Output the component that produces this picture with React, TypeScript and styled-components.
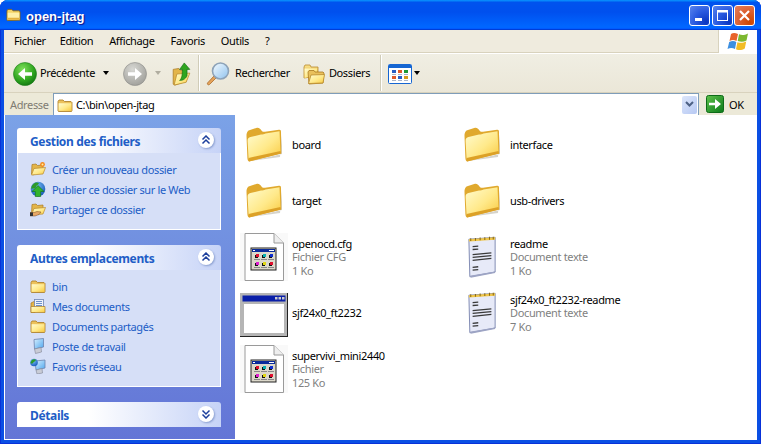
import React from 'react';
import styled, { createGlobalStyle } from 'styled-components';

const GlobalStyle = createGlobalStyle`
  html, body {
    margin: 0;
    padding: 0;
    background: #fff;
  }
  body {
    font-family: "Noto Sans", "Liberation Sans", sans-serif;
    font-size: 11px;
    letter-spacing: -0.36px;
  }
  svg {
    display: block;
  }
`;

const Window = styled.div`
  width: 761px;
  height: 444px;
  display: flex;
  flex-direction: column;
  overflow: hidden;
  border-radius: 8px 8px 0 0;
  background: #0a4fe4;
  box-shadow: inset 1px 0 #0831d9, inset -1px 0 #0831d9, inset 0 -1px #0831d9;
`;

const TitleBar = styled.div`
  height: 30px;
  flex: none;
  display: flex;
  align-items: center;
  padding: 0 6px 0 6px;
  box-sizing: border-box;
  background: linear-gradient(180deg, #0997ff, #0053ee 8%, #0050ee 40%, #06f 88%, #06f 93%, #005bff 95%, #003dd7 96%, #003dd7);
`;

const TitleText = styled.div`
  flex: 1;
  margin-left: 5px;
  padding-top: 2px;
  color: #fff;
  letter-spacing: 0;
  font: bold 13px "Liberation Sans", sans-serif;
  text-shadow: 1px 1px 1px #0f1089;
`;

const WinButton = styled.div<{ $close?: boolean }>`
  width: 21px;
  height: 21px;
  margin-left: 1.5px;
  box-sizing: border-box;
  border: 1px solid #fff;
  border-radius: 3px;
  display: flex;
  align-items: center;
  justify-content: center;
  background: ${p =>
    p.$close
      ? 'radial-gradient(circle at 80% 85%, #cc4600, #dc6030 50%, #e5805d)'
      : 'radial-gradient(circle at 85% 85%, #0a35c0, #2a5ae0 50%, #5a85ee)'};
`;

const Frame = styled.div`
  flex: 1;
  min-height: 0;
  display: flex;
  flex-direction: column;
  margin: 0 4px 4px;
  background: #fff;
`;

const MenuRow = styled.div`
  height: 23px;
  flex: none;
  display: flex;
  background: #efebde;
  box-sizing: border-box;
  border-bottom: 1px solid #d8d2bd;
`;

const MenuItems = styled.div`
  flex: 1;
  display: flex;
  align-items: center;
  padding: 0 0 2px 2px;
`;

const MenuItem = styled.span`
  padding: 0 8px;
  color: #000;

  &:first-child {
    padding-right: 6px;
  }
`;

const LogoBox = styled.div`
  width: 39px;
  margin-bottom: -1px;
  flex: none;
  background: #fff;
  border-left: 1px solid #d8d2bd;
  box-sizing: border-box;
  display: flex;
  align-items: center;
  justify-content: center;
`;

const Toolbar = styled.div`
  height: 40px;
  flex: none;
  display: flex;
  align-items: center;
  box-sizing: border-box;
  padding: 2px 0 0 9px;
  background: linear-gradient(180deg, #f0eee3, #ebe7d8);
  border-top: 1px solid #fff;
  border-bottom: 1px solid #d8d2bd;
`;

const ToolLabel = styled.span<{ $gap?: number }>`
  margin-left: ${p => p.$gap ?? 3}px;
  margin-top: -4px;
  color: #000;
`;

const Caret = styled.span<{ $off?: boolean; $x: number }>`
  width: 0;
  height: 0;
  margin-left: ${p => p.$x}px;
  margin-top: -2px;
  border-left: 3.5px solid transparent;
  border-right: 3.5px solid transparent;
  border-top: 4px solid ${p => (p.$off ? '#b0ada0' : '#000')};
`;

const ToolSeparator = styled.div<{ $x: number }>`
  width: 1px;
  height: 36px;
  margin: -2px 0 0 ${p => p.$x}px;
  background: #d0ccb8;
  border-right: 1px solid #fff;
`;

const IconSlot = styled.div<{ $x: number }>`
  margin-left: ${p => p.$x}px;
  flex: none;
`;

const AddressBar = styled.div`
  height: 22px;
  flex: none;
  display: flex;
  align-items: center;
  background: #ece9d8;
`;

const AddressLabel = styled.span`
  width: 49px;
  flex: none;
  padding-left: 6px;
  box-sizing: border-box;
  color: #7f7c73;
`;

const AddressField = styled.div`
  width: 646px;
  height: 22px;
  flex: none;
  display: flex;
  align-items: center;
  gap: 3px;
  box-sizing: border-box;
  padding: 0 1px 0 3px;
  background: #fff;
  border: 1px solid #7f9db9;
  border-bottom: none;
`;

const AddressText = styled.span`
  flex: 1;
  color: #000;
`;

const DropButton = styled.div`
  width: 15px;
  height: 18px;
  border-radius: 2px;
  background: linear-gradient(135deg, #dce6fb, #b7c9f3);
  display: flex;
  align-items: center;
  justify-content: center;
`;

const GoLabel = styled.span`
  margin-left: 5px;
  color: #000;
`;

const Body = styled.div`
  flex: 1;
  min-height: 0;
  display: flex;
`;

const Sidebar = styled.div`
  width: 231px;
  flex: none;
  box-sizing: border-box;
  padding: 13px 14px 0 12px;
  display: flex;
  flex-direction: column;
  gap: 15px;
  background: linear-gradient(180deg, #7ba2e7, #6375d6);
  border-left: 1px solid #fff;
  border-bottom: 1px solid #fff;
`;

const Panel = styled.div``;

const PanelHeader = styled.div`
  height: 25px;
  display: flex;
  align-items: center;
  justify-content: space-between;
  box-sizing: border-box;
  padding: 0 7px 0 13px;
  border-radius: 3px 3px 0 0;
  background: linear-gradient(90deg, #fff 35%, #c6d3f7);
`;

const PanelTitle = styled.span`
  padding-top: 2px;
  color: #215dc6;
  font: bold 12px "Noto Sans", "Liberation Sans", sans-serif;
  letter-spacing: -0.36px;
`;

const Chevron = styled.div`
  width: 16px;
  height: 16px;
  margin-bottom: 1px;
  border-radius: 50%;
  background: #fff;
  box-shadow: 1px 1px 2px #8a9fd0;
  display: flex;
  align-items: center;
  justify-content: center;
`;

const PanelBody = styled.div`
  padding: 6px 12px 10px;
  background: #d6dff7;
  border: 1px solid #fff;
  border-top: none;
`;

const TaskLink = styled.div`
  height: 20px;
  display: flex;
  align-items: center;
  gap: 6px;
  color: #215dc6;
`;

const Content = styled.div`
  flex: 1;
  padding: 2px 0 0 5px;
  background: #fff;
  display: grid;
  grid-template-columns: 218px 218px;
  grid-auto-rows: 56px;
  align-content: start;
`;

const FileItem = styled.div<{ $col: number; $row: number }>`
  grid-column: ${p => p.$col};
  grid-row: ${p => p.$row};
  display: flex;
  align-items: center;
  gap: 4px;
`;

const FileIcon = styled.div`
  width: 48px;
  height: 48px;
  flex: none;
  display: flex;
  align-items: center;
  justify-content: center;
`;

const FileText = styled.div`
  display: flex;
  flex-direction: column;
  line-height: 13.5px;
`;

const FileName = styled.span`
  color: #000;
`;

const FileMeta = styled.span`
  color: #7f7f7f;
`;

const Gradients = () => (
  <svg width="0" height="0" style={{ position: 'absolute' }}>
    <defs>
      <linearGradient id="folderFront" x1="0" y1="0" x2="1" y2="1">
        <stop offset="0" stopColor="#fffcd0" />
        <stop offset="0.55" stopColor="#ffe98a" />
        <stop offset="1" stopColor="#f9c93f" />
      </linearGradient>
      <linearGradient id="folderBack" x1="0" y1="0" x2="0" y2="1">
        <stop offset="0" stopColor="#fbe58e" />
        <stop offset="1" stopColor="#d69a2a" />
      </linearGradient>
      <radialGradient id="greenBall" cx="0.4" cy="0.3" r="0.8">
        <stop offset="0" stopColor="#7ee05a" />
        <stop offset="0.6" stopColor="#2fa51f" />
        <stop offset="1" stopColor="#0b6b0f" />
      </radialGradient>
      <radialGradient id="greyBall" cx="0.4" cy="0.3" r="0.8">
        <stop offset="0" stopColor="#d8d8d4" />
        <stop offset="1" stopColor="#9b9b96" />
      </radialGradient>
      <radialGradient id="globe" cx="0.4" cy="0.3" r="0.8">
        <stop offset="0" stopColor="#7cc0f5" />
        <stop offset="1" stopColor="#0d4fb5" />
      </radialGradient>
      <linearGradient id="screen" x1="0" y1="0" x2="1" y2="1">
        <stop offset="0" stopColor="#d8f0ff" />
        <stop offset="1" stopColor="#4ea6ee" />
      </linearGradient>
      <linearGradient id="goGreen" x1="0" y1="0" x2="1" y2="1">
        <stop offset="0" stopColor="#5ec24a" />
        <stop offset="1" stopColor="#0b7a1a" />
      </linearGradient>
      <linearGradient id="lens" x1="0" y1="0" x2="1" y2="1">
        <stop offset="0" stopColor="#f4fbff" />
        <stop offset="1" stopColor="#8fc2ee" />
      </linearGradient>
    </defs>
  </svg>
);

const FolderBig = () => (
  <svg width="36" height="36" viewBox="0 0 36 36">
    <path d="M4 34 L36 27 L36 8 L34 30 Z" fill="#b9b5a8" opacity="0.6" />
    <path d="M0.5 9 C0.5 5 2 3.5 4 3 L11 0.8 C13 0.6 14 1.5 15.5 3.5 C16.5 5 17.5 5 19 4.7 L33 2.8 C34.5 2.6 35 3.2 35 5 L35.3 26.5 L3 34.5 C2 34 1.5 33 1.4 31 Z" fill="#e0a92e" />
    <path d="M1.6 14 C1.6 11.5 2.6 10.6 4.5 10.1 L15 7.6 C17 7.1 18 7.1 19.5 6.4 L33.5 4.2 L34.5 25.6 L4 33 C3 33 2.6 32 2.5 30.5 Z" fill="url(#folderFront)" />
    <path d="M2.5 31 L34.5 24 L35 26.5 L3 34.5 Z" fill="#dca127" />
  </svg>
);

const OpenFolder = () => (
  <g>
    <path d="M2 3.5 L6 3 L7.5 4.5 L13 4 L13 8 L3 14 L1.5 13 Z" fill="#e3b54a" stroke="#a97a22" strokeWidth="0.7" />
    <path d="M1.5 14 L4 7.5 L15.5 6.5 L13 13 Z" fill="url(#folderFront)" stroke="#b98a2d" strokeWidth="0.7" />
  </g>
);

const FolderSmall = () => (
  <svg width="16" height="16" viewBox="0 0 16 16">
    <path d="M1 4.5 L2 3 L6 3 L7.5 4.5 L14 4.5 L15 5.5 L15 13.5 L14.5 14.5 L1.5 14.5 L1 14 Z" fill="#ecc25c" stroke="#a97a22" strokeWidth="0.8" />
    <path d="M1.6 6.2 L14.4 6.2 L14.4 13.8 L1.6 13.8 Z" fill="url(#folderFront)" />
  </svg>
);

const NewFolderIcon = () => (
  <svg width="16" height="16" viewBox="0 0 16 16">
    <OpenFolder />
    <circle cx="12.5" cy="3.5" r="2.4" fill="#f58a1f" />
    <circle cx="12.5" cy="3.5" r="1" fill="#fff2a0" />
  </svg>
);

const PublishIcon = () => (
  <svg width="16" height="16" viewBox="0 0 16 16">
    <circle cx="8" cy="8" r="7.3" fill="url(#globe)" />
    <path d="M3 3.5 C5 1 8 1 9 2.5 C8 4.5 6 4 6 6 C5 8 3 7 1.5 8 C1 6 2 4.5 3 3.5 Z" fill="#2c9a28" />
    <path d="M8 4.5 L14 10.5 L10.7 10.5 L10.7 15.5 L5.3 15.5 L5.3 10.5 L2 10.5 Z" fill="#33b42c" stroke="#0e6b12" strokeWidth="0.6" />
  </svg>
);

const ShareIcon = () => (
  <svg width="16" height="16" viewBox="0 0 16 16">
    <OpenFolder />
    <path d="M0 11.5 L4 11.5 L7 10.5 L11 11 L9 13.5 L5 15 L0 15 Z" fill="#e8a867" stroke="#7b4a20" strokeWidth="0.5" />
    <rect x="0" y="11.5" width="3" height="3.5" fill="#333" />
  </svg>
);

const MyDocsIcon = () => (
  <svg width="16" height="16" viewBox="0 0 16 16">
    <path d="M1 5 L5 3 L5 14.5 L1 14.5 Z" fill="#e3b54a" stroke="#a97a22" strokeWidth="0.7" />
    <rect x="4.5" y="1.5" width="9" height="8" fill="#eef3fb" stroke="#6f86b5" strokeWidth="0.8" />
    <path d="M6 3.5 H12 M6 5.5 H12 M6 7.5 H12" stroke="#5d84c4" strokeWidth="0.9" />
    <path d="M1 8.5 H15 V14.5 H1 Z" fill="url(#folderFront)" stroke="#a97a22" strokeWidth="0.7" />
  </svg>
);

const ComputerIcon = () => (
  <svg width="16" height="16" viewBox="0 0 16 16">
    <path d="M4 1.5 L13.5 0.5 L13.5 9 L4.5 11 Z" fill="url(#screen)" stroke="#6c83ad" strokeWidth="0.8" />
    <path d="M4.5 11 L11 9.5 L11.5 14 L5.5 15.5 Z" fill="#c9ccd6" stroke="#7f8596" strokeWidth="0.6" />
  </svg>
);

const NetworkIcon = () => (
  <svg width="16" height="16" viewBox="0 0 16 16">
    <path d="M5 3 L15 2 L15 10 L6 12 Z" fill="url(#screen)" stroke="#6c83ad" strokeWidth="0.8" />
    <path d="M6 12 L12 10.5 L12.5 15 L7 16 Z" fill="#c9ccd6" stroke="#7f8596" strokeWidth="0.6" />
    <circle cx="4" cy="4.5" r="3.8" fill="url(#globe)" />
    <path d="M1.5 2.5 C3 1 5 1 6 2 C5 4 3.5 3.5 3 5 C2 6 1 5.5 0.5 5 Z" fill="#2c9a28" />
  </svg>
);

const Chevrons = ({ down }: { down?: boolean }) => (
  <svg width="10" height="10" viewBox="0 0 10 10">
    <path
      d={down ? 'M1.5 1.5 L5 5 L8.5 1.5 M1.5 5.5 L5 9 L8.5 5.5' : 'M1.5 4.5 L5 1 L8.5 4.5 M1.5 8.5 L5 5 L8.5 8.5'}
      fill="none"
      stroke="#1c3f9c"
      strokeWidth="1.5"
    />
  </svg>
);

const NavBall = ({ forward }: { forward?: boolean }) => (
  <svg width="24" height="24" viewBox="0 0 24 24">
    <circle cx="12" cy="12" r="11.5" fill={forward ? 'url(#greyBall)' : 'url(#greenBall)'} stroke={forward ? '#8c8c88' : '#1c7d1a'} strokeWidth="0.6" />
    <path
      d={forward ? 'M5 10.2 H12 V6 L19 12 L12 18 V13.8 H5 Z' : 'M19 10.2 H12 V6 L5 12 L12 18 V13.8 H19 Z'}
      fill="#fff"
    />
  </svg>
);

const UpIcon = () => (
  <svg width="19" height="24" viewBox="0 0 20 26">
    <path d="M1 8 L7 7 L9 9 L15 9 L15 21 L3 25 L1 24 Z" fill="#e3b54a" stroke="#a97a22" strokeWidth="0.8" />
    <path d="M2 25 L5 13 L19 12 L15 22 Z" fill="url(#folderFront)" stroke="#b98a2d" strokeWidth="0.8" />
    <path d="M13 1 L19 8 L16 8 L16 15 C14 19 11 20 8 20 C10 18 11 15 11 8 L8 8 Z" fill="#2fa51f" stroke="#0e6b12" strokeWidth="0.7" />
  </svg>
);

const SearchIcon = () => (
  <svg width="24" height="24" viewBox="0 0 24 24">
    <path d="M8 14 L1.5 21 C1 22 2 23.5 3.5 22.5 L10 16 Z" fill="#e6a35a" stroke="#a96c2b" strokeWidth="0.8" />
    <circle cx="14.5" cy="9" r="8" fill="url(#lens)" stroke="#8ea3b8" strokeWidth="1.6" />
  </svg>
);

const FoldersIcon = () => (
  <svg width="22" height="22" viewBox="0 0 22 22">
    <path d="M1 4 L2 2 L7 2 L8 4 L15 4 L15 13 L1 15 Z" fill="url(#folderBack)" stroke="#b98a2d" strokeWidth="0.8" />
    <path d="M1.5 15 L1.5 5.5 L14 5.5 L14 12 Z" fill="url(#folderFront)" />
    <path d="M5 9 L6 7.5 L11 7.5 L12 9 L20 9 L21 10 L20 20 L6 21 Z" fill="#e9c05c" stroke="#a97a22" strokeWidth="0.8" />
    <path d="M5.5 20.5 L8 12 L21.5 11.5 L20 20 Z" fill="url(#folderFront)" stroke="#b98a2d" strokeWidth="0.8" />
  </svg>
);

const ViewsIcon = () => (
  <svg width="24" height="20" viewBox="0 0 24 20">
    <rect x="0.5" y="0.5" width="23" height="19" rx="1" fill="#fff" stroke="#1666d2" />
    <rect x="1" y="1" width="22" height="3" fill="#1666d2" />
    <rect x="4" y="6" width="4" height="3" fill="#2a5fc4" />
    <rect x="10" y="6" width="4" height="3" fill="#e05a2a" />
    <rect x="16" y="6" width="4" height="3" fill="#1f9a35" />
    <rect x="4" y="12" width="4" height="3" fill="#e05a2a" />
    <rect x="10" y="12" width="4" height="3" fill="#2a5fc4" />
    <rect x="16" y="12" width="4" height="3" fill="#d89a1a" />
    <path d="M4 10.5 H8 M10 10.5 H14 M16 10.5 H20 M4 16.5 H8 M10 16.5 H14 M16 16.5 H20" stroke="#a9b4c8" />
  </svg>
);

const GoIcon = () => (
  <svg width="18" height="18" viewBox="0 0 18 18">
    <rect x="0.5" y="0.5" width="17" height="17" rx="2" fill="url(#goGreen)" stroke="#0d6b18" />
    <path d="M3 7.7 H9 V4 L15 9 L9 14 V10.3 H3 Z" fill="#fff" />
  </svg>
);

const DropChevron = () => (
  <svg width="9" height="7" viewBox="0 0 9 7">
    <path d="M1 1 L4.5 4.5 L8 1" fill="none" stroke="#4d6185" strokeWidth="2" />
  </svg>
);

const WindowsLogo = () => (
  <svg width="22" height="20" viewBox="0 0 22 20">
    <path d="M4 2 C6 0.5 8 0.5 11 2 L9.5 9 C7 7.5 5 7.5 2.5 9 Z" fill="#e8632b" />
    <path d="M12 2.3 C15 3.5 17 3.5 21 1.5 L19.5 8.5 C16.5 10 14 10 10.7 9 Z" fill="#7cb82f" />
    <path d="M2.2 10 C5 8.5 7 8.5 9.3 10 L8 17 C5.5 15.5 3 15.5 0.5 17 Z" fill="#3d8fe0" />
    <path d="M10.4 10.2 C13.5 11 16 11 19.2 9.5 L17.8 16.5 C14.5 18.5 12 18.5 9 17.2 Z" fill="#f2bc25" />
  </svg>
);

const MinGlyph = () => (
  <svg width="13" height="13" viewBox="0 0 13 13">
    <rect x="2" y="9" width="7" height="3" fill="#fff" />
  </svg>
);

const MaxGlyph = () => (
  <svg width="13" height="13" viewBox="0 0 13 13">
    <rect x="1.5" y="1.5" width="10" height="10" fill="none" stroke="#fff" />
    <rect x="1" y="1" width="11" height="2.5" fill="#fff" />
  </svg>
);

const CloseGlyph = () => (
  <svg width="13" height="13" viewBox="0 0 13 13">
    <path d="M2 2 L11 11 M11 2 L2 11" stroke="#fff" strokeWidth="2.2" />
  </svg>
);

const TitleFolder = () => (
  <svg width="15" height="14" viewBox="0 0 16 15">
    <path d="M1 3 L2 1.5 L6 1.5 L7.5 3 L14 3 L15 4 L15 13 L1.5 13.5 L1 13 Z" fill="#f5d469" stroke="#8a6410" strokeWidth="0.9" />
    <path d="M1.8 5 H14.2 V12.4 H1.8 Z" fill="#fff0a8" />
    <path d="M1.8 10.5 H14.2 V12.6 H1.8 Z" fill="#e5b13e" />
  </svg>
);

const DocSquare = ({ x, y, color }: { x: number; y: number; color: string }) => (
  <>
    <rect x={x - 1} y={y + 1} width="3" height="3" fill="#111" />
    <rect x={x} y={y} width="3" height="3" fill={color} />
    <path d={`M${x - 2} ${y + 5.5} H${x + 4}`} stroke="#888" />
  </>
);

const ProgramDoc = () => (
  <svg width="48" height="48" viewBox="0 0 48 48">
    <rect x="0" y="0" width="48" height="48" fill="#f9f9f9" />
    <path d="M5 0.5 H34 L43.5 10 V47.5 H5 Z" fill="#fff" stroke="#9a9a9a" />
    <path d="M34 0.5 V10 H43.5" fill="#eee" stroke="#9a9a9a" />
    <rect x="11" y="15" width="25" height="22" fill="#dcd8ca" stroke="#222" />
    <rect x="12" y="16" width="23" height="3" fill="#0a2a9a" />
    <rect x="13" y="17" width="2" height="1" fill="#fff" />
    <rect x="29" y="17" width="5" height="1" fill="#fff" />
    <DocSquare x={16} y={21} color="#e0102e" />
    <DocSquare x={23} y={21} color="#0ab0b0" />
    <DocSquare x={30} y={21} color="#1030d0" />
    <DocSquare x={16} y={29} color="#e020d0" />
    <DocSquare x={23} y={29} color="#e0d810" />
    <DocSquare x={30} y={29} color="#e0102e" />
  </svg>
);

const AppWindow = () => (
  <svg width="48" height="47" viewBox="0 -3 48 47">
    <rect x="0" y="0" width="48" height="44" fill="#222" />
    <rect x="0" y="0" width="47" height="43" fill="#b5b5b5" />
    <rect x="2.5" y="2.5" width="43" height="6" fill="#0a1fa8" />
    <rect x="35" y="4" width="2.5" height="2.5" fill="#ccc" />
    <rect x="38.5" y="4" width="2.5" height="2.5" fill="#ccc" />
    <rect x="42" y="4" width="2.5" height="2.5" fill="#ccc" />
    <rect x="4" y="11" width="40" height="29" fill="#fff" />
  </svg>
);

const NotepadIcon = () => (
  <svg width="30" height="44" viewBox="0 0 32 44">
    <path d="M2 3 L30 1 L30 38 L3 43 Z" fill="#e7eaf8" stroke="#7c86b0" />
    <path d="M3 42 L30 37.5 L30 39 L4 44 Z" fill="#9da4c4" />
    <path d="M2 3 L30 1 L30 3.5 L2 5.5 Z" fill="#f0c64a" />
    <path d="M4 5 V2 M9 4.6 V1.6 M14 4.2 V1.2 M19 3.9 V0.9 M24 3.5 V0.5 M28 3.2 V0.5" stroke="#8a6a10" strokeWidth="1.1" />
    <path d="M6 11 L12 10.5 M6 14 L12 13.5 M6 19.5 L26 17.5 M6 22.5 L26 20.5 M6 25.5 L26 23.5 M6 33 L12 32.4 M6 36 L12 35.4" stroke="#3a3a3a" strokeWidth="1.4" />
  </svg>
);

const files = [
  { col: 1, row: 1, icon: <FolderBig />, name: 'board' },
  { col: 2, row: 1, icon: <FolderBig />, name: 'interface' },
  { col: 1, row: 2, icon: <FolderBig />, name: 'target' },
  { col: 2, row: 2, icon: <FolderBig />, name: 'usb-drivers' },
  { col: 1, row: 3, icon: <ProgramDoc />, name: 'openocd.cfg', meta: ['Fichier CFG', '1 Ko'] },
  { col: 2, row: 3, icon: <NotepadIcon />, name: 'readme', meta: ['Document texte', '1 Ko'] },
  { col: 1, row: 4, icon: <AppWindow />, name: 'sjf24x0_ft2232' },
  { col: 2, row: 4, icon: <NotepadIcon />, name: 'sjf24x0_ft2232-readme', meta: ['Document texte', '7 Ko'] },
  { col: 1, row: 5, icon: <ProgramDoc />, name: 'supervivi_mini2440', meta: ['Fichier', '125 Ko'] },
];

const fileTasks = [
  { icon: <NewFolderIcon />, label: 'Créer un nouveau dossier' },
  { icon: <PublishIcon />, label: 'Publier ce dossier sur le Web' },
  { icon: <ShareIcon />, label: 'Partager ce dossier' },
];

const places = [
  { icon: <FolderSmall />, label: 'bin' },
  { icon: <MyDocsIcon />, label: 'Mes documents' },
  { icon: <FolderSmall />, label: 'Documents partagés' },
  { icon: <ComputerIcon />, label: 'Poste de travail' },
  { icon: <NetworkIcon />, label: 'Favoris réseau' },
];

const menus = ['Fichier', 'Edition', 'Affichage', 'Favoris', 'Outils', '?'];

export default function App() {
  return (
    <>
      <GlobalStyle />
      <Gradients />
      <Window>
        <TitleBar>
          <TitleFolder />
          <TitleText>open-jtag</TitleText>
          <WinButton><MinGlyph /></WinButton>
          <WinButton><MaxGlyph /></WinButton>
          <WinButton $close><CloseGlyph /></WinButton>
        </TitleBar>
        <Frame>
          <MenuRow>
            <MenuItems>
              {menus.map(m => <MenuItem key={m}>{m}</MenuItem>)}
            </MenuItems>
            <LogoBox><WindowsLogo /></LogoBox>
          </MenuRow>
          <Toolbar>
            <NavBall />
            <ToolLabel>Précédente</ToolLabel>
            <Caret $x={8} />
            <IconSlot $x={14}><NavBall forward /></IconSlot>
            <Caret $off $x={8} />
            <IconSlot $x={11}><UpIcon /></IconSlot>
            <ToolSeparator $x={7} />
            <IconSlot $x={6}><SearchIcon /></IconSlot>
            <ToolLabel $gap={5}>Rechercher</ToolLabel>
            <IconSlot $x={13}><FoldersIcon /></IconSlot>
            <ToolLabel $gap={4}>Dossiers</ToolLabel>
            <ToolSeparator $x={10} />
            <IconSlot $x={6}><ViewsIcon /></IconSlot>
            <Caret $x={2} />
          </Toolbar>
          <AddressBar>
            <AddressLabel>Adresse</AddressLabel>
            <AddressField>
              <FolderSmall />
              <AddressText>C:\bin\open-jtag</AddressText>
              <DropButton><DropChevron /></DropButton>
            </AddressField>
            <IconSlot $x={7}><GoIcon /></IconSlot>
            <GoLabel>OK</GoLabel>
          </AddressBar>
          <Body>
            <Sidebar>
              <Panel>
                <PanelHeader>
                  <PanelTitle>Gestion des fichiers</PanelTitle>
                  <Chevron><Chevrons /></Chevron>
                </PanelHeader>
                <PanelBody>
                  {fileTasks.map(t => <TaskLink key={t.label}>{t.icon}{t.label}</TaskLink>)}
                </PanelBody>
              </Panel>
              <Panel>
                <PanelHeader>
                  <PanelTitle>Autres emplacements</PanelTitle>
                  <Chevron><Chevrons /></Chevron>
                </PanelHeader>
                <PanelBody>
                  {places.map(t => <TaskLink key={t.label}>{t.icon}{t.label}</TaskLink>)}
                </PanelBody>
              </Panel>
              <Panel>
                <PanelHeader>
                  <PanelTitle>Détails</PanelTitle>
                  <Chevron><Chevrons down /></Chevron>
                </PanelHeader>
              </Panel>
            </Sidebar>
            <Content>
              {files.map(f => (
                <FileItem key={f.name} $col={f.col} $row={f.row}>
                  <FileIcon>{f.icon}</FileIcon>
                  <FileText>
                    <FileName>{f.name}</FileName>
                    {f.meta?.map(line => <FileMeta key={line}>{line}</FileMeta>)}
                  </FileText>
                </FileItem>
              ))}
            </Content>
          </Body>
        </Frame>
      </Window>
    </>
  );
}
